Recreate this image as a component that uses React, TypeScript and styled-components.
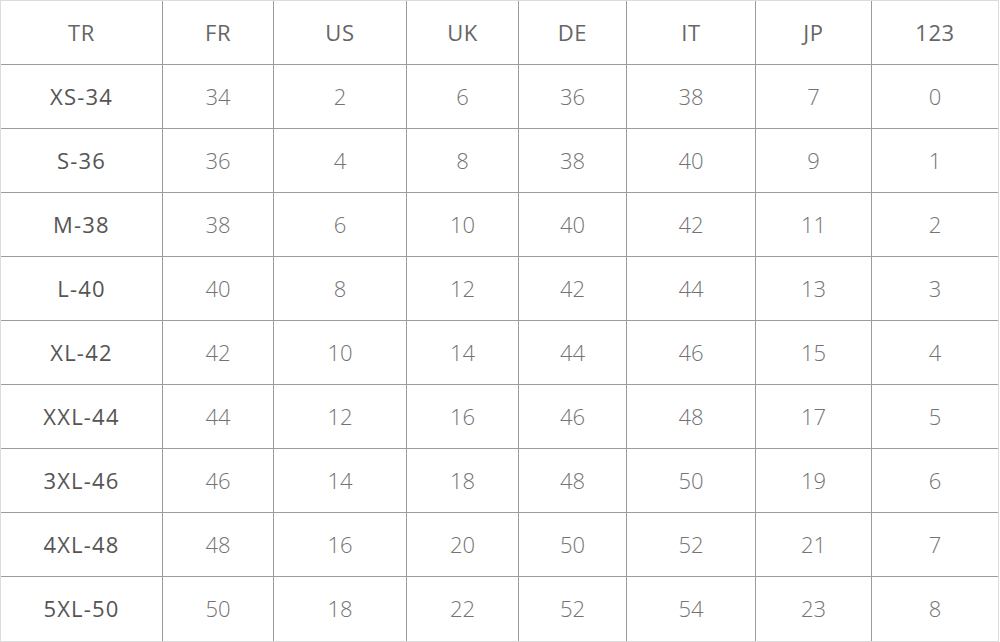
import React from 'react'
import styled, { createGlobalStyle } from 'styled-components'

const GlobalStyle = createGlobalStyle`
  html, body {
    margin: 0;
    padding: 0;
    background: #ffffff;
  }
  body {
    font-family: 'Open Sans', Lato, 'Liberation Sans', sans-serif;
  }
`

const columns = ['TR', 'FR', 'US', 'UK', 'DE', 'IT', 'JP', '123']

const rows: (string | number)[][] = [
  ['XS-34', 34, 2, 6, 36, 38, 7, 0],
  ['S-36', 36, 4, 8, 38, 40, 9, 1],
  ['M-38', 38, 6, 10, 40, 42, 11, 2],
  ['L-40', 40, 8, 12, 42, 44, 13, 3],
  ['XL-42', 42, 10, 14, 44, 46, 15, 4],
  ['XXL-44', 44, 12, 16, 46, 48, 17, 5],
  ['3XL-46', 46, 14, 18, 48, 50, 19, 6],
  ['4XL-48', 48, 16, 20, 50, 52, 21, 7],
  ['5XL-50', 50, 18, 22, 52, 54, 23, 8],
]

const SizeTable = styled.div`
  width: 999px;
  box-sizing: border-box;
  border: 1px solid #dcdcdc;
  display: grid;
  grid-template-columns: 162px 111px 133px 112px 108px 129px 116px 1fr;
  grid-auto-rows: 64px;
`

interface CellProps {
  $head?: boolean
  $first?: boolean
  $lastCol?: boolean
  $lastRow?: boolean
}

const Cell = styled.div<CellProps>`
  display: flex;
  align-items: center;
  justify-content: center;
  box-sizing: border-box;
  padding-bottom: 2px;
  border-right: ${(p) => (p.$lastCol ? 'none' : '1px solid #9c9c9c')};
  border-bottom: ${(p) => (p.$lastRow ? 'none' : '1px solid #9c9c9c')};
  font-size: 22px;
  font-weight: ${(p) => (p.$first || p.$head ? 400 : 300)};
  letter-spacing: ${(p) => (p.$first ? '1.2px' : p.$head ? '0.6px' : '0')};
  color: ${(p) => (p.$first ? '#555555' : p.$head ? '#666666' : '#737373')};
`

export default function App() {
  return (
    <>
      <GlobalStyle />
      <SizeTable>
        {columns.map((c, i) => (
          <Cell key={c} $head $lastCol={i === columns.length - 1}>
            {c}
          </Cell>
        ))}
        {rows.map((r, ri) =>
          r.map((v, ci) => (
            <Cell
              key={`${ri}-${ci}`}
              $first={ci === 0}
              $lastCol={ci === r.length - 1}
              $lastRow={ri === rows.length - 1}>
              {v}
            </Cell>
          )),
        )}
      </SizeTable>
    </>
  )
}
